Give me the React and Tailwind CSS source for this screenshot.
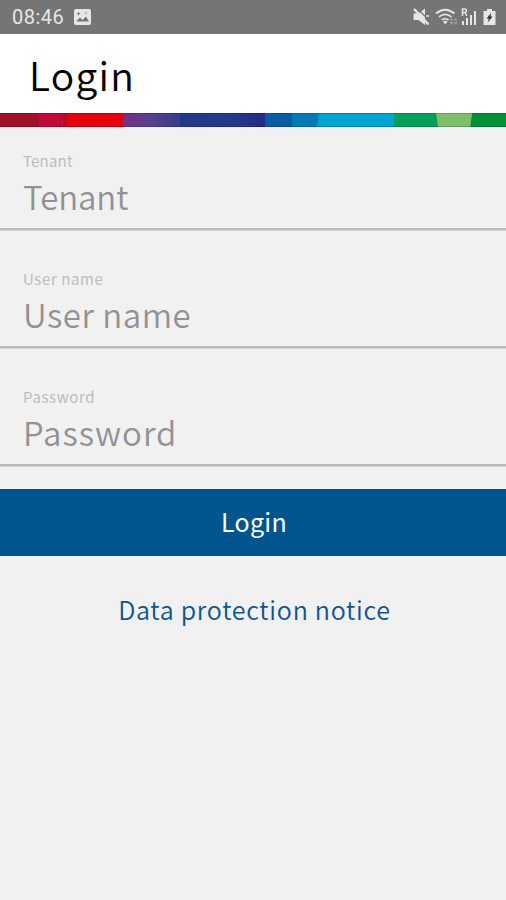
const FIELDS = [
  { label: "Tenant", small: "tracking-[0.2px]", large: "tracking-[-0.1px]" },
  { label: "User name", small: "tracking-[0.6px]", large: "tracking-[0.5px]" },
  { label: "Password", small: "tracking-[0.6px]", large: "tracking-[1px]" },
];

function StatusBar() {
  return (
    <div className="flex h-[34px] items-center bg-[#757575] pl-3 pr-[9px] text-[#e6e6e6]">
      <span className="font-[Roboto] text-[20px] leading-[34px] tracking-[0.5px]">08:46</span>
      <svg className="ml-[10px]" width="17" height="16" viewBox="0 0 17 16">
        <rect width="17" height="16" rx="2" fill="#e6e6e6" />
        <path d="M2.3 12.5 6 8.4l2.5 2.5L12 7.5l3 5z" fill="#757575" />
        <path d="M4.5 3.2v3M3 4.7h3M12 3.4v1.5" stroke="#757575" strokeWidth="1" />
      </svg>
      <svg className="ml-auto" width="84" height="20" viewBox="0 0 84 20" fill="#e6e6e6">
        <path d="M0.500 6.500h5l6.500-5v16.500l-6.500-5h-5z" />
        <path d="m3 0 14 14.500" stroke="#757575" strokeWidth="1.200" />
        <path d="m1 2 14.500 15.500" stroke="#e6e6e6" strokeWidth="2.400" />
        <path d="M13 9h3" stroke="#e6e6e6" strokeWidth="1.500" />
        <g fill="none" stroke="#e6e6e6" strokeWidth="1.700">
          <path d="M23 6.500q9-7.500 18.500 0M26 9.800q6-5 12.500 0M29 13q3-2.500 6.500 0" />
        </g>
        <path d="m30 14.500 2.300 3 2.300-3q-2.300-1.500-4.600 0z" />
        <path d="m36.500 13.500 2-3 2 3zM36.500 15h4l-2 3zM41 13.500h3.500l-1.750-3zM41 15h3.500l-1.750 3z" opacity=".4" />
        <path d="M49.500 9V2h2.200a1.700 1.700 0 0 1 0 3.500h-2M52 5.500l2 3.500" fill="none" stroke="#e6e6e6" strokeWidth="1.500" />
        <path d="M49 14h2v4h-2zM53 11h2v7h-2zM57 8h2v10h-2zM61 4h2v14h-2z" />
        <path d="M74 2h5v2h3.500v14h-12V4H74z" />
        <path d="m78 6-4.500 5.500h2.300l-1 4 4.700-6h-2z" fill="#333" />
      </svg>
    </div>
  );
}

function ColorBand() {
  return (
    <svg className="block" width="506" height="14" viewBox="0 0 506 14">
      <defs>
        <linearGradient id="violet">
          <stop offset="0" stopColor="#743188" />
          <stop offset=".5" stopColor="#58408f" />
          <stop offset="1" stopColor="#343d8b" />
        </linearGradient>
        <linearGradient id="navy">
          <stop offset="0" stopColor="#203c86" />
          <stop offset=".65" stopColor="#25398b" />
          <stop offset="1" stopColor="#262982" />
        </linearGradient>
      </defs>
      <path d="M0 0h40v14H0z" fill="#a01028" />
      <path d="M38 0h26l-2 14H39z" fill="#c00a38" />
      <path d="M63 0h6l-2 14h-5z" fill="#b80b20" />
      <path d="M68 0h56v14H66z" fill="#e6000b" />
      <path d="M123 0h58v14h-58z" fill="url(#violet)" />
      <path d="M180 0h85v14h-85z" fill="url(#navy)" />
      <path d="M265 0h28v14h-28z" fill="#0b5aa8" />
      <path d="M292 0h27v14h-27z" fill="#0479b7" />
      <path d="M319 0h76v14h-78z" fill="#00a4d0" />
      <path d="M394 0h43l2 14h-45z" fill="#03a05a" />
      <path d="M436 0h36l-2 14h-32z" fill="#7dbf6b" />
      <path d="M472 0h34v14h-36z" fill="#029034" />
      <path d="M0 0h506v1H0zM0 13h506v1H0z" fill="#000040" opacity=".18" />
    </svg>
  );
}

function Field({ label, small, large }) {
  return (
    <label className="flex h-[118px] flex-col">
      <span className={`mt-[38px] h-5 pl-[23px] text-[15px] leading-5 text-[#bcbcbc] ${small}`}>{label}</span>
      <span className={`mt-[5px] h-10 pl-[23px] text-[33px] font-[350] leading-10 text-[#929292] ${large}`}>{label}</span>
      <span className="mt-auto h-[3px] border-b border-[#d2d2d2] bg-[#b8b8b8]" />
    </label>
  );
}

export default function App() {
  return (
    <main className="flex h-[900px] w-[506px] flex-col overflow-hidden bg-[#f1f1f1] font-['Noto_Sans_CJK_JP','Open_Sans',sans-serif]">
      <StatusBar />
      <header className="flex h-[79px] items-center bg-white pl-[29px]">
        <h1 className="text-[39px] font-[350] leading-[50px] tracking-[1.3px] text-black">Login</h1>
      </header>
      <ColorBand />
      <form className="-mt-[14px] flex flex-col">
        {FIELDS.map((field) => (
          <Field key={field.label} {...field} />
        ))}
        <button type="button" className="mt-[22px] h-[67px] bg-[#00558f] pb-[2px] pl-[2px] text-[25px] leading-[65px] tracking-[0.3px] text-white">
          Login
        </button>
      </form>
      <a className="mt-[33px] pl-[3px] text-center text-[25px] font-[350] leading-10 tracking-[0.75px] text-[#0c5590]">Data protection notice</a>
    </main>
  );
}
